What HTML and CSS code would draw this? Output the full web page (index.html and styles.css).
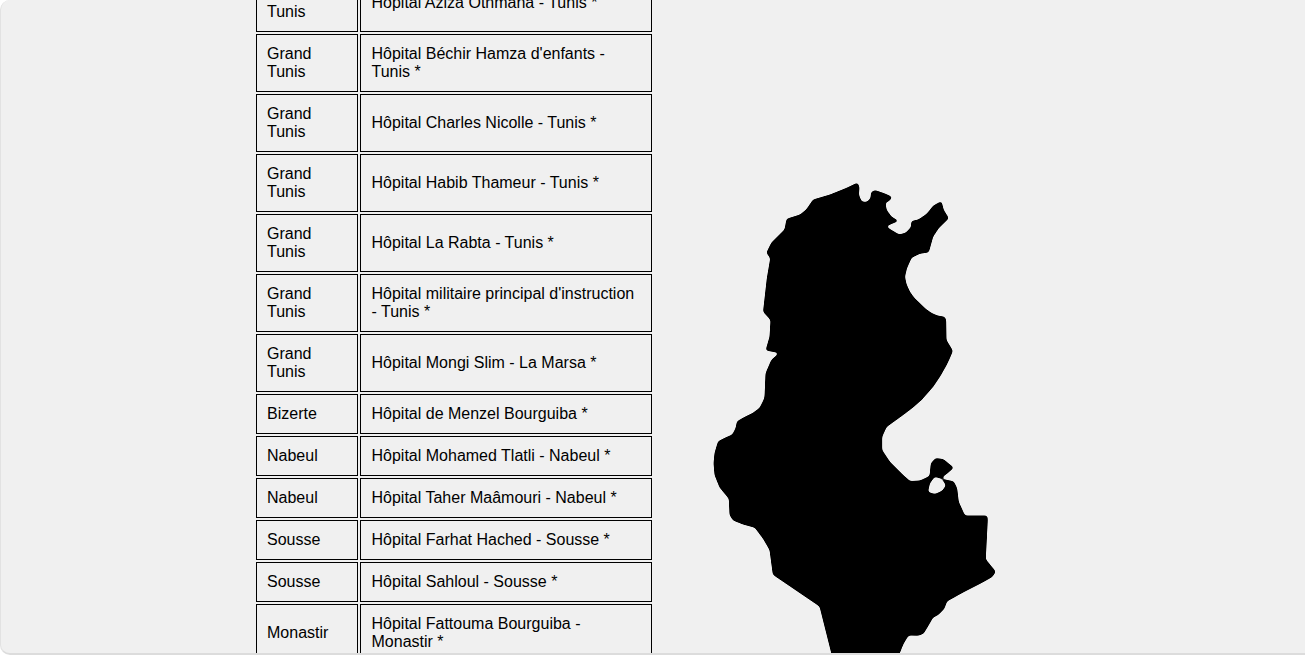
FILE: index.html
```html
<!DOCTYPE html>
<html lang="fr">

<head>
  <meta charset="UTF-8" />
  <meta name="viewport" content="width=device-width, initial-scale=1.0" />
  <title>Hôpitaux de Tunisie</title>
  <link rel="stylesheet" href="styles.css">
</head>

<body>
  <div class="frame">
    <table class="hospitals">
      <tr><td class="region">Grand Tunis</td><td class="name">Hôpital Aziza Othmana - Tunis *</td></tr>
      <tr><td class="region">Grand Tunis</td><td class="name">Hôpital Béchir Hamza d'enfants - Tunis *</td></tr>
      <tr><td class="region">Grand Tunis</td><td class="name">Hôpital Charles Nicolle - Tunis *</td></tr>
      <tr><td class="region">Grand Tunis</td><td class="name">Hôpital Habib Thameur - Tunis *</td></tr>
      <tr><td class="region">Grand Tunis</td><td class="name">Hôpital La Rabta - Tunis *</td></tr>
      <tr><td class="region">Grand Tunis</td><td class="name">Hôpital militaire principal d'instruction - Tunis *</td></tr>
      <tr><td class="region">Grand Tunis</td><td class="name">Hôpital Mongi Slim - La Marsa *</td></tr>
      <tr><td class="region">Bizerte</td><td class="name">Hôpital de Menzel Bourguiba *</td></tr>
      <tr><td class="region">Nabeul</td><td class="name">Hôpital Mohamed Tlatli - Nabeul *</td></tr>
      <tr><td class="region">Nabeul</td><td class="name">Hôpital Taher Maâmouri - Nabeul *</td></tr>
      <tr><td class="region">Sousse</td><td class="name">Hôpital Farhat Hached - Sousse *</td></tr>
      <tr><td class="region">Sousse</td><td class="name">Hôpital Sahloul - Sousse *</td></tr>
      <tr><td class="region">Monastir</td><td class="name">Hôpital Fattouma Bourguiba - Monastir *</td></tr>
    </table>

    <!-- carte de la Tunisie -->
    <svg class="map" viewBox="700 175 310 510" width="310" height="510">
      <defs>
        <filter id="smooth" x="-5%" y="-5%" width="110%" height="110%">
          <feGaussianBlur stdDeviation="1.7" />
          <feComponentTransfer>
            <feFuncA type="linear" slope="5" intercept="-2" />
          </feComponentTransfer>
        </filter>
      </defs>
      <path filter="url(#smooth)" fill-rule="evenodd" d="M857.5 182.5L859.5 186.7L859 195L861.7 201.5L866.7 202L870.5 198.3L871 192L875 190L885 193.5L892.5 197L889.3 201L885.5 202.7L886.7 210L891.7 216.7L899 221L893.3 223.3L886 226.5L893.3 231L899.3 234.5L906 232.5L911 227L911.2 221L918.3 219.5L926.7 213.8L933.3 205.5L941.5 201L943.8 210L949 218.3L938.8 228.3L933.2 236.7L928.8 252.5L920 253.8L911.7 257.8L907 268.3L905 276.7L906.5 284L910 291.7L914.5 298L920 303.3L925.7 308.7L931.7 313L937.5 315.5L945 316.8L946.2 320L946.5 340L953 350.7L950 358L946.7 365L940.5 376L933.3 386.7L921.7 400L912.5 408L903.3 415L886.7 427L882.2 436.7L882.2 450L890 461.7L903.3 475L910 481L920 480.5L929.5 476L930.8 463.3L935.5 458L943.3 459L954 467.7L947 473.7L942 477.5L945 479.5L953.8 481.2L957.2 488.3L958.8 501.7L965 515.5L987.5 515.5L987.8 520L985.8 559.3L996 571.7L992 577.2L980.3 583.8L963.6 592.2L947 601.5L944.4 608.8L938.6 614.8L933 617.8L928.6 625.5L923.6 633.8L918.4 635.8L908.6 635.5L903.6 643.8L895 665L835 665L831.2 653L819.5 606.5L772.8 574.8L769.5 550L763 538.8L754.8 527.8L743 524.5L733 520.5L729.5 515L728.8 498.8L719.5 487.6L714.5 475L713.5 463.3L714.5 453L718 441.2L724.8 437.8L732.3 434.5L735.6 428L736.9 421.2L744.8 416.8L753 412.8L759.6 407.8L763.5 400L764.5 396.7L765.5 373.3L771.2 360L779 353L775 352.2L765.5 350.5L769.5 336.7L770.5 320L763 311.7L766.8 278.3L770.2 258.3L766.3 252.7L771.2 242.8L784.5 229.5L786.5 218.8L800 214.5L806.2 209.5L813 199.5L830 194.5L846.7 187.8ZM935 476.5L930 483.3L928 492L935 494L942.5 490.5L946 485L941 478.5L936.5 477.5Z" />
    </svg>
  </div>
</body>

</html>
```

FILE: styles.css
```css
html, body {
  margin: 0;
  padding: 0;
  height: 100%;
  background-color: #fff;
}

body {
  font-family: 'Liberation Sans', Arial, sans-serif;
  font-size: 16px;
  color: #000;
}

.frame {
  display: flex;
  align-items: flex-start;
  box-sizing: border-box;
  height: 655px;
  padding-left: 253px;
  background-color: #f0f0f0;
  border-left: 1px solid #e2e2e2;
  border-bottom: 2px solid #dcdcdc;
  border-radius: 10px 0 0 10px;
  overflow: hidden;
}

.hospitals {
  flex: none;
  width: 400px;
  margin-top: -28px;
  border-collapse: separate;
  border-spacing: 2px;
}

.hospitals td {
  padding: 10px;
  border: 1px solid #000;
  line-height: 18px;
}

.hospitals .name {
  padding-left: 10.5px;
  padding-right: 9.5px;
}

.region {
  width: 80px;
}

.map {
  flex: none;
  margin-top: 175px;
  margin-left: 46px;
}
```
